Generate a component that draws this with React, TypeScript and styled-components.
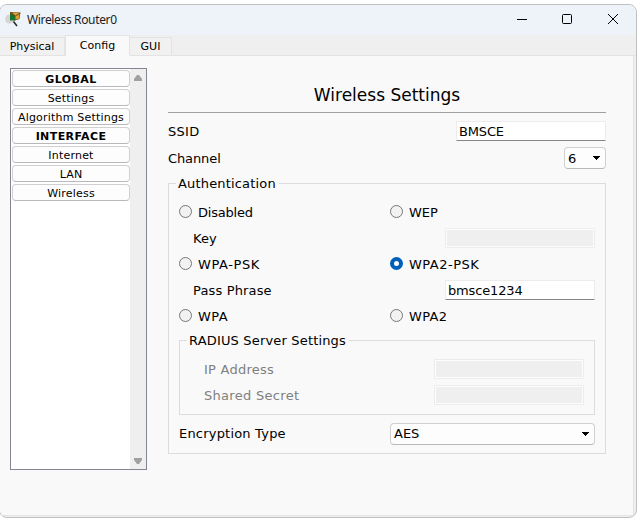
import React from "react";
import styled, { createGlobalStyle } from "styled-components";

const GlobalStyle = createGlobalStyle`
  * { box-sizing: border-box; }
  body { margin: 0; background: #fff; overflow: hidden; }
`;

const Window = styled.div`
  width: 638px;
  height: 514px;
  margin: 4px 0 0 -1px;
  border: 1px solid #c0c0c0;
  border-radius: 8px;
  overflow: hidden;
  background: #efefef;
  display: flex;
  flex-direction: column;
  color: #000;
  font-family: "DejaVu Sans", Verdana, sans-serif;
  font-size: 13px;
`;

const TitleBar = styled.header`
  height: 30px;
  flex: none;
  display: flex;
  align-items: center;
  padding-left: 5px;
  background: #eef3fa;

  > svg { margin-bottom: 2px; }
`;

const WindowTitle = styled.span`
  flex: 1;
  margin-left: 6px;
  font: 12px/16px "Noto Sans", "Open Sans", sans-serif;
  letter-spacing: -0.35px;
  color: #1b1b1b;
`;

const WindowButton = styled.span`
  width: 46px;
  height: 28px;
  align-self: flex-start;
  display: flex;
  align-items: center;
  justify-content: center;
`;

const TabBar = styled.nav`
  height: 21px;
  flex: none;
  display: flex;
  align-items: flex-end;
`;

const Tab = styled.div<{ $width: number; $active?: boolean }>`
  width: ${(p) => p.$width}px;
  height: ${(p) => (p.$active ? 21 : 19)}px;
  line-height: ${(p) => (p.$active ? 20 : 18)}px;
  border: 1px solid #e3e3e3;
  border-bottom-color: ${(p) => (p.$active ? "#f9f9f9" : "#e3e3e3")};
  border-left-width: ${(p) => (p.$active ? 1 : 0)}px;
  background: ${(p) => (p.$active ? "#f9f9f9" : "#f1f1f1")};
  font-size: 11px;
  text-align: center;
`;

const TabFill = styled.div`
  flex: 1;
  border-bottom: 1px solid #e3e3e3;
`;

const Pane = styled.main`
  flex: 1;
  margin: 0 2px 1px 0;
  border: solid #e3e3e3;
  border-width: 0 1px 1px 0;
  background: #f9f9f9;
  display: flex;
  align-items: flex-start;
  padding: 12px 0 0 10px;
`;

const Sidebar = styled.aside`
  width: 137px;
  height: 402px;
  border: 1px solid #828790;
  background: #fff;
  display: flex;
`;

const SideList = styled.div`
  width: 119px;
  padding: 1px 0 0 1px;
  display: flex;
  flex-direction: column;
  gap: 2px;
`;

const SideItem = styled.div<{ $bold?: boolean }>`
  height: 17px;
  border: 1px solid #d0d0d0;
  border-bottom-color: #b9b9bd;
  border-radius: 4px;
  background: #fdfdfd;
  font-size: 11px;
  line-height: 17px;
  font-weight: ${(p) => (p.$bold ? 700 : 400)};
  letter-spacing: ${(p) => (p.$bold ? 0.4 : 0.2)}px;
  display: flex;
  justify-content: center;
  white-space: nowrap;
`;

const ScrollBar = styled.div`
  width: 16px;
  background: #efefef;
  display: flex;
  flex-direction: column;
  align-items: center;
  justify-content: space-between;
  padding: 6px 0 5px;
`;

const Content = styled.section`
  width: 438px;
  margin-left: 21px;
`;

const Heading = styled.h1`
  margin: 0;
  height: 45px;
  padding-top: 17px;
  border-bottom: 1px solid #a0a0a0;
  font-size: 17px;
  line-height: 21px;
  font-weight: 400;
  text-align: center;
`;

const Field = styled.div<{ $height?: number; $indent?: number; $muted?: boolean }>`
  height: ${(p) => p.$height ?? 26}px;
  padding-left: ${(p) => p.$indent ?? 0}px;
  color: ${(p) => (p.$muted ? "#808080" : "#000")};
  display: flex;
  align-items: center;
  justify-content: space-between;
`;

const Label = styled.span<{ $tracking?: number }>`
  letter-spacing: ${(p) => p.$tracking ?? 0}px;
`;

const TextBox = styled.div<{ $disabled?: boolean }>`
  width: 150px;
  height: 20px;
  border: 1px solid #ececec;
  border-bottom-color: ${(p) => (p.$disabled ? "#ececec" : "#868686")};
  background: ${(p) => (p.$disabled ? "#efefef" : "#fff")};
  box-shadow: ${(p) => (p.$disabled ? "inset 0 0 0 1px #fdfdfd" : "none")};
  border-radius: 1px;
  padding-left: 2px;
  line-height: 19px;
  letter-spacing: -0.15px;
`;

const Combo = styled.div<{ $width: number }>`
  width: ${(p) => p.$width}px;
  height: 22px;
  border: 1px solid #d0d0d0;
  border-bottom-color: #b9b9b9;
  border-radius: 4px;
  background: #fdfdfd;
  display: flex;
  align-items: center;
  justify-content: space-between;
  padding: 0 5px 0 3px;
`;

const Group = styled.fieldset<{ $height: number }>`
  min-width: 0;
  height: ${(p) => p.$height}px;
  margin: 0;
  padding: 0 10px;
  border: 1px solid #dcdcdc;
`;

const Legend = styled.legend`
  height: 17px;
  line-height: 17px;
  margin-left: -3px;
  padding: 0 3px 0 2px;
  letter-spacing: 0.17px;
`;

const RadioRow = styled.div`
  height: 26px;
  display: grid;
  grid-template-columns: 211px 1fr;
  align-items: center;
`;

const RadioLabel = styled.div`
  display: flex;
  align-items: center;
  gap: 6px;
`;

const RadioMark = styled.span<{ $checked?: boolean }>`
  width: 13px;
  height: 13px;
  margin-bottom: 2px;
  border-radius: 50%;
  border: ${(p) => (p.$checked ? "4px solid #005fb8" : "1px solid #777")};
  background: ${(p) => (p.$checked ? "#fff" : "#f2f2f2")};
`;

const Block = styled.div<{ $top: number }>`
  padding-top: ${(p) => p.$top}px;
`;

const RouterIcon = () => (
  <svg width="16" height="16" viewBox="0 0 16 16">
    <ellipse cx="4" cy="8" rx="3.8" ry="4.5" fill="#d3d5d6" />
    <path d="M5 1 15.5 1.5 14.5 8 10 9.5 5 9Z" fill="#68511b" />
    <path d="M7 1.5 14 2 10.5 4.5Z" fill="#eda539" />
    <path d="M10.5 5.5 14.5 3 14 7.5 10.5 8.5Z" fill="#e0a034" />
    <path d="M5 4 8 3.5 10 6v3.5H5Z" fill="#16762d" />
    <path d="m6.5 9.5 2 .5-1.5 2.5-2-2Z" fill="#cfd2cf" />
    <path d="m8.5 10.5 3.5 4.5" stroke="#252525" strokeWidth="1.5" />
  </svg>
);

const Arrow = ({ up = false }: { up?: boolean }) => (
  <svg width="8" height="6" viewBox="0 0 8 6">
    <path d={up ? "M3 0h2l3 4v2H0V4Z" : "M0 0h8v2L5 6H3L0 2Z"} fill="#a0a0a0" />
  </svg>
);

const DropArrow = () => (
  <svg width="7" height="4" viewBox="0 0 7 4" shapeRendering="crispEdges">
    <path d="M0 0h7v1H6v1H5v1H4v1H3V3H2V2H1V1H0Z" fill="#000" />
  </svg>
);

const Radio = ({ label, checked, tracking }: { label: string; checked?: boolean; tracking?: number }) => (
  <RadioLabel>
    <RadioMark $checked={checked} />
    <Label $tracking={tracking}>{label}</Label>
  </RadioLabel>
);

const sideItems = [
  { label: "GLOBAL", bold: true },
  { label: "Settings" },
  { label: "Algorithm Settings" },
  { label: "INTERFACE", bold: true },
  { label: "Internet" },
  { label: "LAN" },
  { label: "Wireless" },
];

export default function App() {
  return (
    <>
      <GlobalStyle />
      <Window>
        <TitleBar>
          <RouterIcon />
          <WindowTitle>Wireless Router0</WindowTitle>
          <WindowButton>
            <svg width="12" height="10"><path d="M2 5.5h10" stroke="#000" /></svg>
          </WindowButton>
          <WindowButton>
            <svg width="10" height="10"><rect x=".5" y=".5" width="9" height="9" rx="1" fill="none" stroke="#000" /></svg>
          </WindowButton>
          <WindowButton>
            <svg width="10" height="10"><path d="m0 0 10 10M10 0 0 10" stroke="#000" /></svg>
          </WindowButton>
        </TitleBar>
        <TabBar>
          <Tab $width={65}>Physical</Tab>
          <Tab $width={65} $active>Config</Tab>
          <Tab $width={42}>GUI</Tab>
          <TabFill />
        </TabBar>
        <Pane>
          <Sidebar>
            <SideList>
              {sideItems.map((item) => (
                <SideItem key={item.label} $bold={item.bold}>{item.label}</SideItem>
              ))}
            </SideList>
            <ScrollBar>
              <Arrow up />
              <Arrow />
            </ScrollBar>
          </Sidebar>
          <Content>
            <Heading>Wireless Settings</Heading>
            <Field $height={36}>
              <Label $tracking={0.3}>SSID</Label>
              <TextBox>BMSCE</TextBox>
            </Field>
            <Field $height={18}>
              <Label $tracking={-0.1}>Channel</Label>
              <Combo $width={42}>6<DropArrow /></Combo>
            </Field>
            <Block $top={8}>
              <Group $height={279}>
                <Legend>Authentication</Legend>
                <Block $top={7}>
                  <RadioRow><Radio label="Disabled" tracking={-0.2} /><Radio label="WEP" /></RadioRow>
                  <Field $indent={14}><Label>Key</Label><TextBox $disabled /></Field>
                  <RadioRow><Radio label="WPA-PSK" tracking={0.6} /><Radio label="WPA2-PSK" tracking={0.5} checked /></RadioRow>
                  <Field $indent={14}><Label $tracking={0.15}>Pass Phrase</Label><TextBox>bmsce1234</TextBox></Field>
                  <RadioRow><Radio label="WPA" tracking={0.4} /><Radio label="WPA2" tracking={0.3} /></RadioRow>
                  <Block $top={3}>
                    <Group $height={83}>
                      <Legend>RADIUS Server Settings</Legend>
                      <Block $top={7}>
                        <Field $indent={14} $muted><Label $tracking={0.25}>IP Address</Label><TextBox $disabled /></Field>
                        <Field $indent={14} $muted><Label $tracking={0.3}>Shared Secret</Label><TextBox $disabled /></Field>
                      </Block>
                    </Group>
                  </Block>
                  <Field $height={37}>
                    <Label $tracking={0.2}>Encryption Type</Label>
                    <Combo $width={205}>AES<DropArrow /></Combo>
                  </Field>
                </Block>
              </Group>
            </Block>
          </Content>
        </Pane>
      </Window>
    </>
  );
}
